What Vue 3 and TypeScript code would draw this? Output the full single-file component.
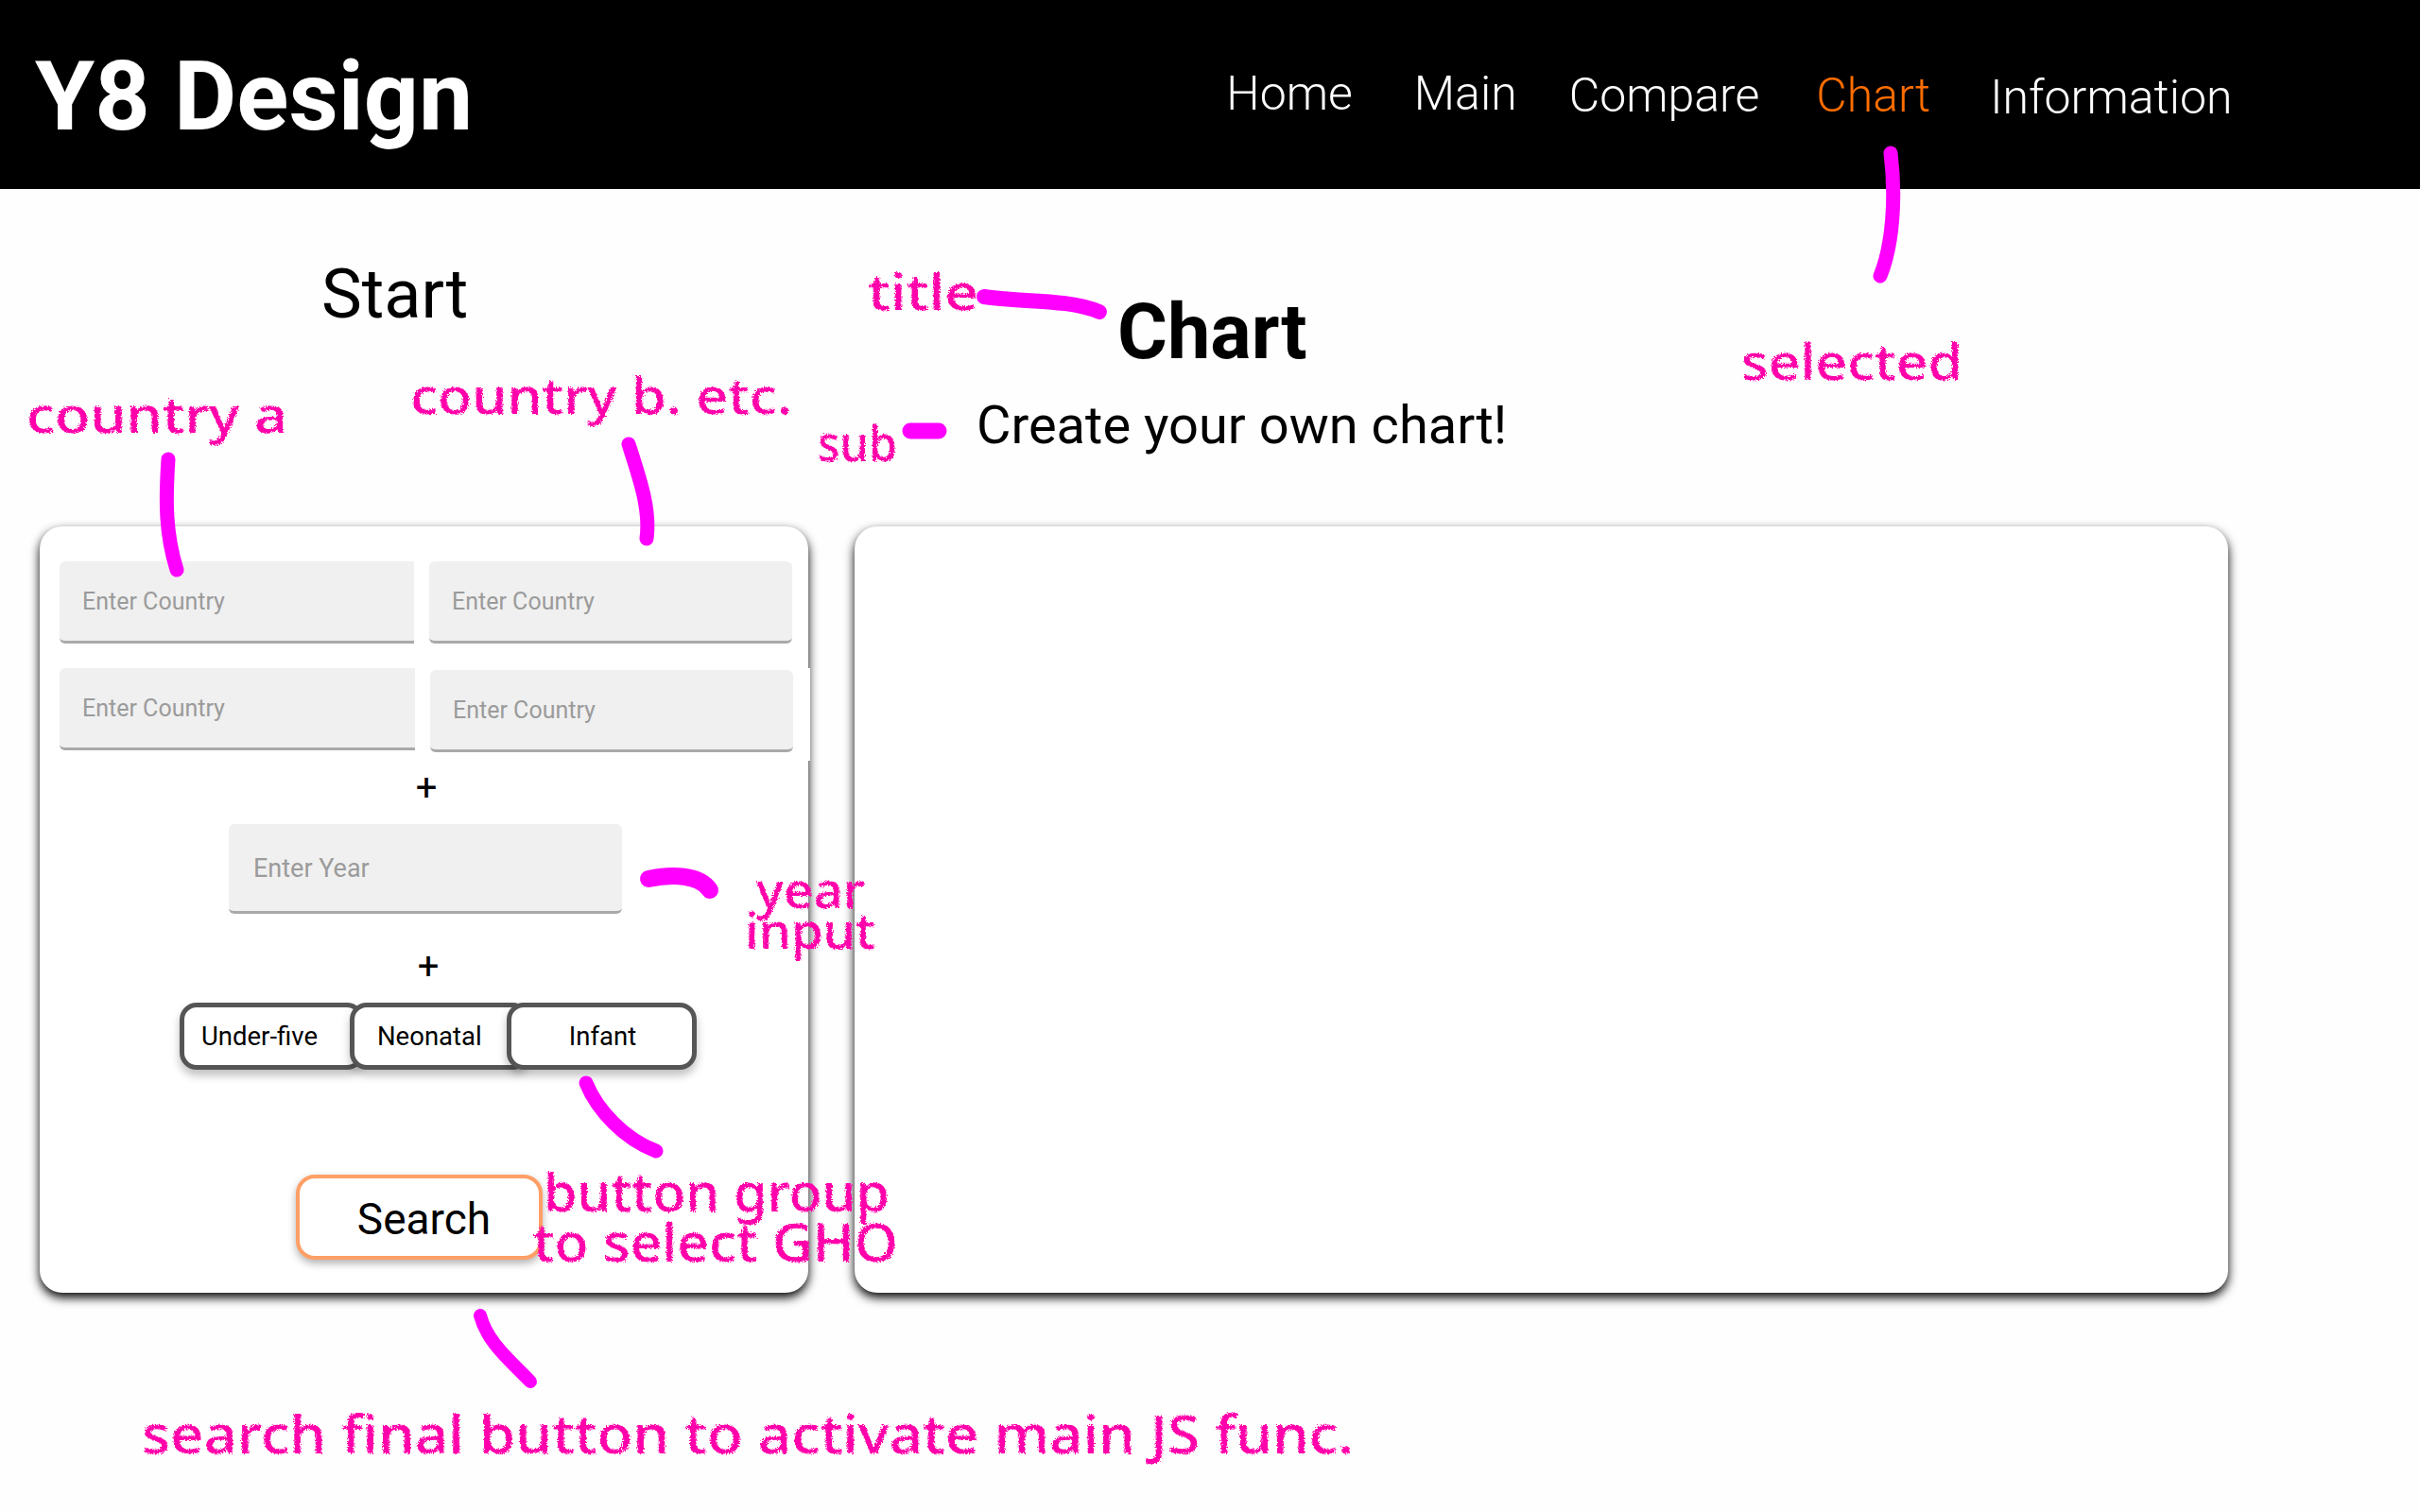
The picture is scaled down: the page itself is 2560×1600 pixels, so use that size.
<script setup lang="ts">
interface Note {
  text: string;
  x: number;
  y: number;
  width: number;
  size: number;
}

const navItems = ["Home", "Main", "Compare", "Chart", "Information"];
const selected = "Chart";

// hand drawn notes on top of the mockup
const notes: Note[] = [
  { text: "country a", x: 28, y: 458, width: 276, size: 52 },
  { text: "country b. etc.", x: 434, y: 438, width: 404, size: 52 },
  { text: "title", x: 918, y: 328, width: 117, size: 52 },
  { text: "sub", x: 865, y: 488, width: 84, size: 52 },
  { text: "selected", x: 1842, y: 402, width: 234, size: 52 },
  { text: "year", x: 800, y: 961, width: 115, size: 52 },
  { text: "input", x: 788, y: 1004, width: 138, size: 52 },
  { text: "button group", x: 575, y: 1282, width: 366, size: 56 },
  { text: "to select GHO", x: 564, y: 1335, width: 386, size: 56 },
  { text: "search final button to activate main JS func.", x: 150, y: 1538, width: 1282, size: 56 },
];

const strokes = [
  { d: "M178 486C175 530 175 565 187 603", w: 15 },
  { d: "M665 470C678 510 688 540 684 570", w: 15 },
  { d: "M2000 162C2006 210 2002 260 1989 292", w: 15 },
  { d: "M1041 314C1080 320 1130 316 1163 330", w: 16 },
  { d: "M963 456L993 456", w: 17 },
  { d: "M686 930C710 925 740 925 751 942", w: 18 },
  { d: "M620 1146C632 1175 660 1205 694 1218", w: 15 },
  { d: "M508 1392C515 1420 540 1440 561 1462", w: 14 },
];
</script>

<template>
  <div class="page">
    <header class="topbar">
      <div class="logo">Y8 Design</div>
      <nav class="nav">
        <a
          v-for="item in navItems"
          :key="item"
          class="nav-link"
          :class="{ active: item === selected }"
        >{{ item }}</a>
      </nav>
    </header>

    <main class="content">
      <section class="col">
        <div class="col-head">
          <h2 class="start">Start</h2>
        </div>
        <div class="card form">
          <div class="row">
            <input class="field left" placeholder="Enter Country" />
            <input class="field right" placeholder="Enter Country" />
          </div>
          <div class="row second">
            <input class="field left" placeholder="Enter Country" />
            <input class="field right nudge" placeholder="Enter Country" />
          </div>
          <div class="plus">+</div>
          <input class="field year" placeholder="Enter Year" />
          <div class="plus lower">+</div>
          <div class="group">
            <button class="seg under">Under-five</button>
            <button class="seg neo">Neonatal</button>
            <button class="seg inf">Infant</button>
          </div>
          <button class="search">Search</button>
        </div>
      </section>

      <section class="col">
        <div class="col-head">
          <h1 class="title">Chart</h1>
          <p class="sub">Create your own chart!</p>
        </div>
        <div class="card"></div>
      </section>
    </main>

    <svg class="notes" width="2560" height="1600" viewBox="0 0 2560 1600">
      <defs>
        <filter id="chalk" x="-5%" y="-30%" width="110%" height="160%">
          <feTurbulence type="fractalNoise" baseFrequency="0.7" numOctaves="2" seed="4" />
          <feDisplacementMap in="SourceGraphic" scale="5" />
        </filter>
      </defs>
      <path
        v-for="s in strokes"
        :key="s.d"
        :d="s.d"
        :stroke-width="s.w"
        class="stroke"
      />
      <text
        v-for="n in notes"
        :key="n.text"
        :x="n.x"
        :y="n.y"
        :font-size="n.size"
        :textLength="n.width"
        lengthAdjust="spacingAndGlyphs"
        class="note"
        filter="url(#chalk)"
      >{{ n.text }}</text>
    </svg>
  </div>
</template>

<style scoped>
.page {
  position: relative;
  width: 2560px;
  height: 1600px;
  overflow: hidden;
  font-family: Roboto, "Liberation Sans", sans-serif;
  color: #000;
}

.topbar {
  height: 200px;
  background: #000;
  display: flex;
  align-items: flex-start;
}

.logo {
  margin: 42px 0 0 37px;
  font-size: 102px;
  line-height: 120px;
  font-weight: 700;
  color: #fff;
  white-space: nowrap;
}

.nav {
  position: relative;
  display: flex;
  margin-left: 797px;
  font-size: 50px;
  line-height: 58px;
  font-weight: 300;
  color: #fff;
}

.nav-link {
  margin-top: 70px;
  white-space: nowrap;
}

.nav-link:nth-child(2) {
  margin-left: 65px;
}

.nav-link:nth-child(3) {
  margin-left: 55px;
  margin-top: 72px;
}

.nav-link:nth-child(4) {
  margin-left: 60px;
  margin-top: 72px;
}

.nav-link:nth-child(5) {
  margin-left: 63px;
  margin-top: 74px;
}

.nav-link.active {
  color: #ff6d00;
}

.content {
  display: grid;
  grid-template-columns: 813px 1453px;
  column-gap: 49px;
  padding-left: 42px;
}

.col-head {
  height: 357px;
}

.start {
  margin: 0;
  padding: 70px 0 0 298px;
  font-size: 72px;
  line-height: 84px;
  font-weight: 400;
}

.title {
  margin: 0;
  padding: 105px 0 0 278px;
  font-size: 81px;
  line-height: 94px;
  font-weight: 700;
}

.sub {
  margin: 0;
  padding: 18px 0 0 129px;
  font-size: 56px;
  line-height: 66px;
}

.card {
  height: 811px;
  box-sizing: border-box;
  background: #fff;
  border-radius: 24px;
  box-shadow: 0 5px 11px #000;
}

.form {
  display: flex;
  flex-direction: column;
  align-items: center;
  padding-top: 37px;
}

.row {
  align-self: stretch;
  display: flex;
  gap: 16px;
  padding: 0 17px 0 21px;
}

.second {
  margin-top: 26px;
  margin-right: -2px;
  padding-bottom: 9px;
  padding-right: 16px;
  background: #fff;
  position: relative;
}

.field {
  height: 87px;
  box-sizing: border-box;
  border: 0;
  border-bottom: 3px solid #a9a9a9;
  border-radius: 6px;
  background: #f0f0f0;
  padding: 0 24px;
  font-family: inherit;
  font-size: 25px;
  outline: none;
}

.field::placeholder {
  color: #9b9b9b;
  opacity: 1;
}

.field.left {
  width: 375px;
  border-radius: 6px 0 0 6px;
}

.field.right {
  width: 384px;
}

.second .field.left {
  width: 376px;
}

.nudge {
  margin-top: 2px;
}

.plus {
  margin-top: 8px;
  margin-left: 5px;
  font-size: 40px;
  line-height: 42px;
}

.year {
  margin-top: 17px;
  margin-left: 3px;
  width: 416px;
  height: 95px;
  padding: 2px 26px 0;
  font-size: 27px;
}

.lower {
  margin-top: 35px;
  margin-left: 9px;
}

.group {
  display: flex;
  align-self: flex-start;
  margin: 17px 0 0 148px;
}

.seg {
  height: 71px;
  box-sizing: border-box;
  border: 5px solid #555;
  border-radius: 18px;
  background: #fff;
  font-family: inherit;
  font-size: 27.5px;
  text-align: left;
  box-shadow: 0 6px 10px rgba(0, 0, 0, 0.25);
  position: relative;
  color: #000;
}

.under {
  width: 195px;
  padding: 0 0 0 18px;
}

.neo {
  width: 190px;
  margin-left: -15px;
  padding: 0 0 0 24px;
}

.inf {
  width: 201px;
  margin-left: -24px;
  padding-left: 8px;
  text-align: center;
}

.search {
  align-self: flex-start;
  margin: 111px 0 0 271px;
  width: 261px;
  height: 90px;
  box-sizing: border-box;
  border: 4px solid #ff9f66;
  border-radius: 20px;
  background: #fff;
  font-family: inherit;
  font-size: 46px;
  padding: 3px 0 0 10px;
  color: #000;
  box-shadow: 0 4px 8px rgba(0, 0, 0, 0.3);
}

.notes {
  position: absolute;
  top: 0;
  left: 0;
  pointer-events: none;
}

.stroke {
  fill: none;
  stroke: #ff00ff;
  stroke-linecap: round;
}

.note {
  fill: #ff00aa;
  font-family: "Noto Sans", sans-serif;
  font-weight: 500;
}
</style>

<style>
body {
  background: #fefefe;
}
</style>
